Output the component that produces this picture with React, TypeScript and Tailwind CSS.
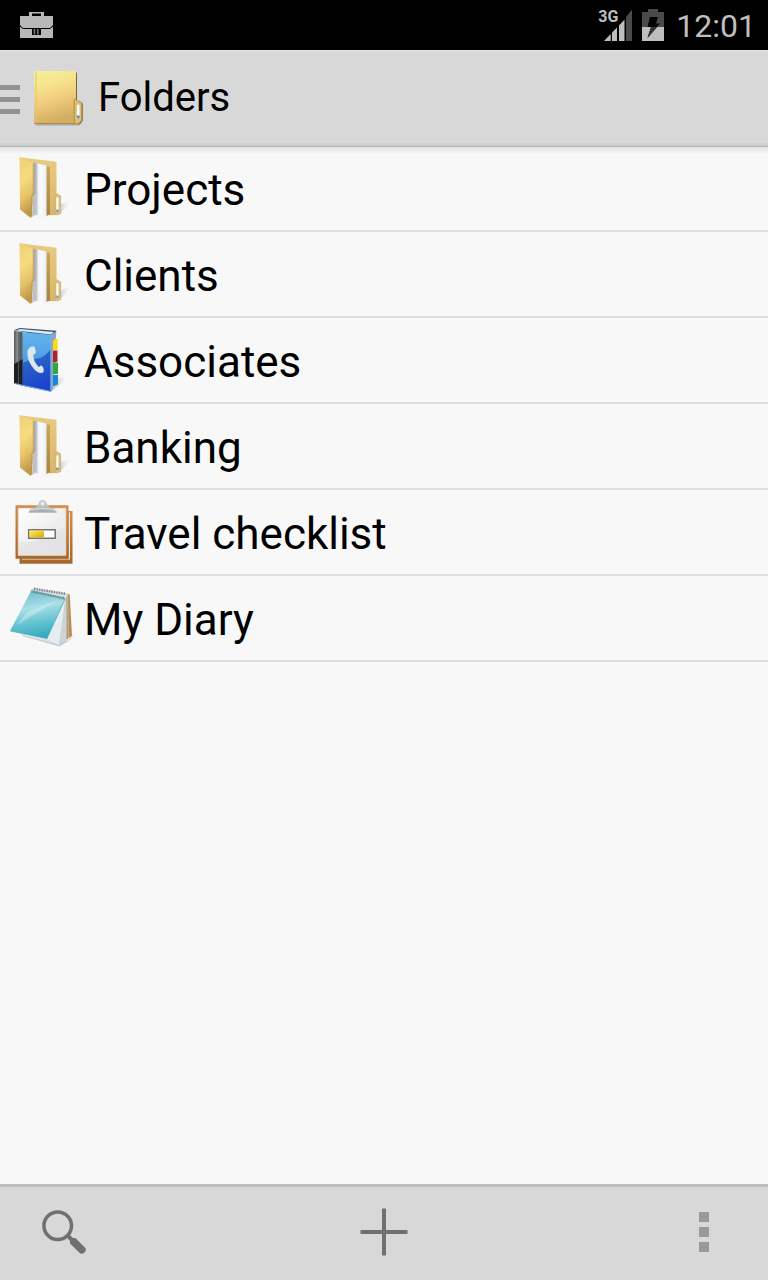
import { useState } from "react";

type IconName = "folder" | "phonebook" | "checklist" | "notepad";

const folders: { id: number; name: string; icon: IconName }[] = [
  { id: 1, name: "Projects", icon: "folder" },
  { id: 2, name: "Clients", icon: "folder" },
  { id: 3, name: "Associates", icon: "phonebook" },
  { id: 4, name: "Banking", icon: "folder" },
  { id: 5, name: "Travel checklist", icon: "checklist" },
  { id: 6, name: "My Diary", icon: "notepad" },
];

export default function App() {
  const [selected, setSelected] = useState<number | null>(null);

  return (
    <div className="flex min-h-screen flex-col bg-[#f8f8f8] font-['Roboto','Noto_Sans',sans-serif] text-black">
      <IconDefs />
      <StatusBar />

      <header className="relative flex h-24 items-center bg-[#d8d8d8] shadow-[inset_0_1px_#e4e4e4,inset_0_-3px_#cfcfcf]">
        <button aria-label="Open navigation" className="flex items-center gap-1.5">
          <svg viewBox="0 0 20 32" className="h-8 w-5" fill="#929292">
            <path d="M0 3h20v5H0zM0 15h20v5H0zM0 27h20v5H0z" />
          </svg>
          <ClosedFolderIcon />
        </button>
        <h1 className="ml-2 text-[40px] leading-[48px]">Folders</h1>
        {/* drop shadow over the first row */}
        <div className="pointer-events-none absolute inset-x-0 top-full h-2 border-t border-[#b2b2b2] bg-linear-to-b from-[#e2e2e2] to-[#f8f8f8]" />
      </header>

      <main className="flex-1">
        <ul>
          {folders.map((f) => (
            <li key={f.id} className="border-b-2 border-[#dedede]">
              <button
                onClick={() => setSelected(f.id)}
                aria-current={selected === f.id}
                className="flex h-[84px] w-full items-center gap-2.5 px-2.5 text-left text-[44px] leading-[52px]"
              >
                <RowIcon name={f.icon} />
                <span className="truncate pt-1">{f.name}</span>
              </button>
            </li>
          ))}
        </ul>
      </main>

      <footer className="flex h-24 items-center justify-between bg-[#d8d8d8] shadow-[inset_0_3px_#bebebe]">
        <button aria-label="Search" className="flex w-32 justify-center">
          <svg viewBox="0 0 64 64" className="size-16" fill="none" stroke="#707070">
            <circle cx="25.7" cy="25.7" r="13.8" strokeWidth="3.5" />
            <path d="M35 35l6 6" strokeWidth="4" />
            <path d="M38 42q-.3-1.500.8-2.400 1.200-1.500 3-1.600h1.600l9.400 9.400q2 2 .3 4.400-1.500 2.200-3.600 2-1.200 0-2-1L38 43.400z" fill="#707070" stroke="none" />
          </svg>
        </button>
        <button aria-label="Add" className="flex w-32 justify-center">
          <svg viewBox="0 0 64 64" className="size-16" fill="#707070">
            <path d="M30 8.500h4V30h21.500v4H34v21.500h-4V34H8.500v-4H30z" />
          </svg>
        </button>
        <button aria-label="More options" className="flex w-32 justify-center">
          <svg viewBox="0 0 64 64" className="size-16" fill="#999999">
            <path d="M27 12h10v10H27zM27 27h10v10H27zM27 42h10v10H27z" />
          </svg>
        </button>
      </footer>
    </div>
  );
}

function StatusBar() {
  return (
    <div className="flex h-[50px] items-center justify-between bg-black pr-3 pl-5 text-[#bebebe]">
      <svg viewBox="0 0 33 26" className="h-[26px] w-[33px]">
        <path d="M9 4V0h15v4h9v9l-3 3H3l-3-3V4z" fill="#b8b8b8" />
        <path d="M12 1.500h9V4h-9z" fill="#000" />
        <path d="M0 14.500l3 2.500h9v6h9v-6h9l3-2.500V26H0z" fill="#b8b8b8" />
        <path d="M13.700 17h1.600v5.500h-1.600zM17 17h1.600v5.500H17z" fill="#777" />
      </svg>
      <div className="flex items-center">
        <div className="relative mr-2.5">
          <svg viewBox="0 0 34 32" className="h-8 w-[34px]">
            <path d="M6 32L12.700 25v7zM14 23.500l5-5V32h-5zM21 16.500l5.500-6V32H21z" fill="#bebebe" />
            <path d="M28 8l6-7.500V32h-6z" fill="#4a4a4a" />
          </svg>
          <span className="absolute top-0 left-0 text-base leading-4 font-bold">3G</span>
        </div>
        <svg viewBox="0 0 22 32" className="mr-3 h-8 w-[22px]">
          <path d="M0 3h6V0h10v3h6v15H0z" fill="#4a4a4a" />
          <path d="M0 18h22v14H0z" fill="#bebebe" />
          <path d="M8 8h8l-2 6.500h4L5.500 29 9 18H5.500z" fill="#000" />
          <path d="M9 18h6.200L5.500 29z" fill="#333" />
        </svg>
        <time className="pt-0.5 text-[32px] leading-10">12:01</time>
      </div>
    </div>
  );
}

function RowIcon({ name }: { name: IconName }) {
  if (name === "phonebook") return <PhonebookIcon />;
  if (name === "checklist") return <ChecklistIcon />;
  if (name === "notepad") return <NotepadIcon />;
  return <OpenFolderIcon />;
}

// Gradients shared by all the icons, defined once per page
function IconDefs() {
  return (
    <svg className="absolute size-0" aria-hidden="true">
      <defs>
        <linearGradient id="closed" x1="0" y1="0" x2="0.25" y2="1">
          <stop offset="0" stopColor="#f6ef98" />
          <stop offset="0.3" stopColor="#f5e58e" />
          <stop offset="0.55" stopColor="#f5d182" />
          <stop offset="1" stopColor="#d2ae62" />
        </linearGradient>
        <linearGradient id="flap" x1="0" y1="0" x2="0.2" y2="1">
          <stop offset="0" stopColor="#edcf78" />
          <stop offset="0.4" stopColor="#f6dc80" />
          <stop offset="0.7" stopColor="#e6c269" />
          <stop offset="1" stopColor="#bd974a" />
        </linearGradient>
        <linearGradient id="back" x1="0" y1="0" x2="0" y2="1">
          <stop offset="0" stopColor="#e8ca82" />
          <stop offset="1" stopColor="#d9b666" />
        </linearGradient>
        <linearGradient id="gap" x1="0" y1="0" x2="0" y2="1">
          <stop offset="0" stopColor="#c9a75c" />
          <stop offset="1" stopColor="#a38443" />
        </linearGradient>
        <linearGradient id="paper" x1="0" y1="0" x2="1" y2="0">
          <stop offset="0" stopColor="#9b9ca0" />
          <stop offset="0.3" stopColor="#c3c5c9" />
          <stop offset="0.36" stopColor="#eff1f6" />
          <stop offset="0.6" stopColor="#fafbfd" />
          <stop offset="1" stopColor="#eceef2" />
        </linearGradient>
        <linearGradient id="shade" x1="0" y1="0" x2="1" y2="0">
          <stop offset="0" stopColor="#999" stopOpacity="0.7" />
          <stop offset="1" stopColor="#ccc" stopOpacity="0" />
        </linearGradient>
        <linearGradient id="cover" x1="0" y1="0" x2="0" y2="1">
          <stop offset="0" stopColor="#62b4ec" />
          <stop offset="0.5" stopColor="#4d9ce4" />
          <stop offset="1" stopColor="#2a63d0" />
        </linearGradient>
        <linearGradient id="coverLow" x1="0" y1="0" x2="0.3" y2="1">
          <stop offset="0" stopColor="#2f74bd" />
          <stop offset="1" stopColor="#1c44cf" />
        </linearGradient>
        <linearGradient id="spine" x1="0" y1="0" x2="1" y2="0">
          <stop offset="0" stopColor="#55595e" />
          <stop offset="0.4" stopColor="#8d9296" />
          <stop offset="0.75" stopColor="#4d5358" />
          <stop offset="1" stopColor="#747c83" />
        </linearGradient>
        <linearGradient id="sheet" x1="0" y1="0" x2="1" y2="1">
          <stop offset="0" stopColor="#fff" />
          <stop offset="0.55" stopColor="#eeeeef" />
          <stop offset="1" stopColor="#e8e8ea" />
        </linearGradient>
        <linearGradient id="wood" x1="0" y1="0" x2="0" y2="1">
          <stop offset="0" stopColor="#d28d4b" />
          <stop offset="1" stopColor="#a5682c" />
        </linearGradient>
        <linearGradient id="metal" x1="0" y1="0" x2="0" y2="1">
          <stop offset="0" stopColor="#d6dadb" />
          <stop offset="1" stopColor="#a4a9ab" />
        </linearGradient>
        <linearGradient id="bar" x1="0" y1="0" x2="1" y2="1">
          <stop offset="0" stopColor="#ffed58" />
          <stop offset="1" stopColor="#d9a900" />
        </linearGradient>
        <linearGradient id="teal" x1="0.4" y1="0" x2="0.6" y2="1">
          <stop offset="0" stopColor="#70bccb" />
          <stop offset="0.35" stopColor="#a9dfe6" />
          <stop offset="0.65" stopColor="#67c3d1" />
          <stop offset="1" stopColor="#2ba7bd" />
        </linearGradient>
        <linearGradient id="leaf" x1="0" y1="0" x2="1" y2="0">
          <stop offset="0" stopColor="#e9f0f4" />
          <stop offset="0.7" stopColor="#d4dde2" />
          <stop offset="1" stopColor="#aeb6ba" />
        </linearGradient>
      </defs>
    </svg>
  );
}

function ClosedFolderIcon() {
  return (
    <svg viewBox="0 0 64 64" className="size-16">
      <path d="M9 57h44l3-3v3l-3 2.500H10z" fill="#a9a9a9" />
      <path d="M49 5.500l2 1.500v28l-2-1z" fill="#77653a" />
      <path d="M8 5h42v53H8z" fill="url(#closed)" />
      <path d="M10 6v51" stroke="#e3c274" strokeWidth="1" />
      <path d="M8.300 57.500H50" stroke="#b18b42" strokeWidth="1" />
      <path d="M56 37l1 .5v17L53.500 58.500l-1-.5z" fill="#8d8061" />
      <path d="M48.300 33.500l2.700.2 1.500 1.600 3.300 1.200v17.800l-3.300 3.400h-4.200z" fill="#e0bd70" stroke="#a6843f" strokeWidth="0.8" />
      <path d="M51 38.700h2.500v11H51z" fill="#fff" />
      <path d="M51 49.500h2.500V52H51z" fill="#4b8fe0" />
    </svg>
  );
}

function OpenFolderIcon() {
  return (
    <svg viewBox="0 0 64 64" className="size-16 shrink-0">
      <path d="M45 59l6-11 9-3q-2 7-13 14z" fill="url(#shade)" />
      <path d="M9.500 1.300l37 4.400v31.600l4.200 2.500v17.700L47 59l-7 .2-17-8z" fill="url(#back)" />
      <path d="M36 10l4 1v47.500L36 60z" fill="url(#gap)" />
      <path d="M23.500 6.500l13 3V62l-13.500-4z" fill="url(#paper)" />
      <path d="M23 40l4-3v21.500l-5 2.500z" fill="#c3c5ca" opacity="0.8" />
      <path d="M9.500 1.300l14 6V38L22 40v20l-1.200 2L10 53.500z" fill="url(#flap)" />
      <path d="M23.300 7.500V38l-1.500 2v20.500" fill="none" stroke="#b9944a" strokeWidth="0.7" />
      <path d="M45.500 38h1.500l3.700 2v17.500L47.200 59h-1.700z" fill="#dcbf7c" stroke="#c7a866" strokeWidth="0.4" />
      <path d="M46.300 41.500h2.200v13h-2.200z" fill="#fff" />
      <path d="M46.300 53.500h2.200V56h-2.200z" fill="#6b9bd0" />
    </svg>
  );
}

function PhonebookIcon() {
  return (
    <svg viewBox="0 0 64 64" className="size-16 shrink-0">
      <path d="M42 62l5-12 9-1q-1 6-14 13z" fill="url(#shade)" />
      <path d="M41 11q6-1.500 6.700.7V22H41z" fill="#fcda16" />
      <path d="M41 22.500h6.500v11q-1 .8-6.500 1z" fill="#b3202e" />
      <path d="M41 34.500h7v11.300l-7 1z" fill="#29ac3d" />
      <path d="M41 47h7v9.500L41 59z" fill="#1987d8" />
      <path d="M4 2l6-2 36.200 2.800L46 8l-4 2z" fill="#2c4f7d" />
      <path d="M6 2.500L10 1l34 3-3 2.500z" fill="#e4e9ed" />
      <path d="M41 6.700l5-3.200V10l-3 3v49l-2 1.500z" fill="#8da6c5" />
      <path d="M4 2.500l9 1.700v53.600L4 55.300z" fill="url(#spine)" />
      <path d="M4 36l9-5v26.800L4 55.300z" fill="#1d2023" />
      <path d="M8.500 4v52.500" stroke="#596066" strokeWidth="0.8" />
      <path d="M12.700 4.200L41 6.700v56.800l-28.300-5.700z" fill="url(#cover)" />
      <path d="M12.700 35Q20 31 27 30.500T41 21v42.500l-28.300-5.700z" fill="url(#coverLow)" />
      <path d="M40.800 7v56.500L4.500 55.500" fill="none" stroke="#7db0e5" strokeWidth="1" />
      <path
        d="M20.500 19q4-2 4.500 1l.8 4q0 2-2.600 2.800 0 7 5.600 12.200l2-1.500q2.300 0 3 5 0 2.800-3 2.500-4.600-.5-8.800-6.500-5.500-8-4.500-15.500 1-3 3-4z"
        fill="#dfe6ec"
      />
    </svg>
  );
}

function ChecklistIcon() {
  return (
    <svg viewBox="0 0 64 64" className="size-16 shrink-0">
      <path d="M9.500 11h53v52.700h-53z" fill="url(#wood)" />
      <path d="M58.700 12.500h1.300V59.500H12v-1h46.700z" fill="#f2e9df" />
      <path d="M5.500 5.200h53v53.500h-53z" fill="url(#wood)" />
      <path d="M8.300 8.300h47.500v47H8.300z" fill="url(#sheet)" stroke="#f4e5d5" strokeWidth="0.8" />
      <path d="M8.700 42q20 2 46.800-16v29H8.700z" fill="#dcdce0" opacity="0.5" />
      <path d="M18.800 12.500q0-3 5-4.500 4.500-1.500 5-4.500 1-3.500 3.800-3.500 3 0 4 3.500.5 3 5 4.500t5 4.500z" fill="url(#metal)" stroke="#b5babb" strokeWidth="0.5" />
      <circle cx="32.600" cy="4" r="1.600" fill="#f0f1f2" />
      <path d="M19 10.500q13-4 27 0" stroke="#dde0e1" fill="none" />
      <path d="M18.700 29.700h26.500v8.600H18.700z" fill="#fff" stroke="#79706a" strokeWidth="1.500" />
      <path d="M19.600 30.700h14.400v6.600H19.600z" fill="url(#bar)" />
    </svg>
  );
}

function NotepadIcon() {
  return (
    <svg viewBox="0 0 64 64" className="size-16 shrink-0">
      <path d="M49 60l13-9 1.500-4q.5 6-12 12z" fill="#b8b8b8" opacity="0.7" />
      <path d="M56.500 7.500l3.200 1L62 50l-6 4z" fill="#b58d5c" />
      <path d="M57.500 8l1 44" stroke="#d9b580" strokeWidth="1" />
      <path d="M13 48l36 10 6-3 1.500 1-7 4.500-37-10.500z" fill="#c5cbce" />
      <path d="M55.700 12L57.500 9l-1 45-7.500 5-36-10 24-4z" fill="url(#leaf)" />
      <path d="M55.500 13L49 59l-12-6z" fill="#e6edf0" />
      <path d="M55.800 12l.7 42-7.500 5z" fill="#ccd4d8" />
      <path d="M22 2l36 5.500-2.500 5.500L21 5z" fill="#d7e0e3" />
      <path d="M21.500 4L55.500 12 37 52.700 0 45z" fill="url(#teal)" />
      <path d="M17 26L48 14 7 39z" fill="#e7f8fb" opacity="0.35" />
      <path d="M21.500 4l34 8-1 2L20.500 6z" fill="#79afb8" />
      <path d="M24 2.800l31.500 5" stroke="#7d8689" strokeWidth="2.400" strokeDasharray="1.500 1" />
      <path d="M23 6l32 6" stroke="#5f858e" strokeWidth="1.400" strokeDasharray="1.500 1" />
      <path d="M.5 45L37 52.500 55 13" fill="none" stroke="#58aebb" strokeWidth="0.700" />
    </svg>
  );
}
